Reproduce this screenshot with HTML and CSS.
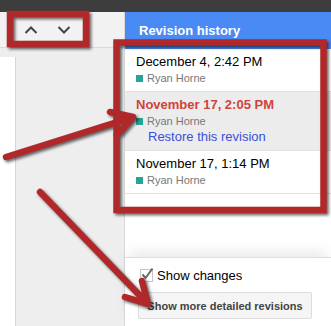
FILE: index.html
```html
<!DOCTYPE html>
<html lang="en">

<head>
    <meta charset="UTF-8">
    <meta name="viewport" content="width=device-width, initial-scale=1.0">
    <title>Revision history</title>
    <link rel="stylesheet" href="styles.css">
</head>

<body>
    <div class="topbar"></div>
    <div class="app">
        <div class="main">
            <div class="toolbar">
                <svg class="nav-icon" width="14" height="8" viewBox="0 0 14 8">
                    <path d="M1.5 7 L7 1.5 L12.5 7" />
                </svg>
                <svg class="nav-icon" width="14" height="8" viewBox="0 0 14 8">
                    <path d="M1.5 1 L7 6.5 L12.5 1" />
                </svg>
            </div>
            <div class="canvas">
                <div class="page"></div>
            </div>
        </div>

        <div class="panel">
            <div class="panel-title">Revision history</div>
            <ul class="revisions">
                <li class="rev">
                    <div class="rev-date">December 4, 2:42 PM</div>
                    <div class="rev-author"><span class="swatch"></span>Ryan Horne</div>
                </li>
                <li class="rev selected">
                    <div class="rev-date">November 17, 2:05 PM</div>
                    <div class="rev-author"><span class="swatch"></span>Ryan Horne</div>
                    <a class="restore" href="#">Restore this revision</a>
                </li>
                <li class="rev">
                    <div class="rev-date">November 17, 1:14 PM</div>
                    <div class="rev-author"><span class="swatch"></span>Ryan Horne</div>
                </li>
            </ul>
            <div class="panel-footer">
                <label class="show-changes">
                    <span class="checkbox">
                        <svg width="15" height="15" viewBox="0 0 15 15">
                            <path d="M2.5 7.5 L5.5 11 L12.5 1.5" />
                        </svg>
                    </span>
                    Show changes
                </label>
                <button class="detail-btn">Show more detailed revisions</button>
            </div>
        </div>
    </div>

    <!-- screenshot annotations drawn on top -->
    <svg class="annotations" width="331" height="326" viewBox="0 0 331 326">
        <rect x="10" y="14" width="76" height="30" />
        <rect x="116.5" y="42.5" width="207" height="167.5" />
        <path d="M6 157 L133 117 M110 112 L133 117 L117 135" />
        <path d="M40 192 L148 304 M125 297 L148 304 L142 281" />
    </svg>
</body>

</html>
```

FILE: styles.css
```css
body {
    margin: 0;
    font-family: "Liberation Sans", Arial, sans-serif;
    width: 331px;
    height: 326px;
    overflow: hidden;
    position: relative;
}

.topbar {
    height: 12px;
    background-color: #3d3d3d;
}

.app {
    display: flex;
    height: 314px;
}

.main {
    width: 124px;
    display: flex;
    flex-direction: column;
    background-color: #eeeeee;
}

.toolbar {
    height: 35px;
    display: flex;
    align-items: center;
    gap: 19px;
    padding-left: 24px;
    background-color: #f2f2f2;
    border-bottom: 1px solid #dadada;
}

.nav-icon path {
    fill: none;
    stroke: #444;
    stroke-width: 2;
}

.canvas {
    flex: 1;
    padding-top: 9px;
}

.page {
    width: 15px;
    height: 100%;
    background-color: #fff;
    border-right: 1px solid #d6d6d6;
}

.panel {
    flex: 1;
    display: flex;
    flex-direction: column;
    background-color: #fff;
    border-left: 1px solid #d9d9d9;
}

.panel-title {
    height: 37px;
    line-height: 37px;
    padding-left: 14px;
    background-color: #4a8af4;
    color: #fff;
    font-size: 13px;
    font-weight: bold;
}

.revisions {
    flex: 1;
    list-style: none;
    margin: 0;
    padding: 0;
}

.rev {
    padding: 5px 12px 5px 11px;
    border-bottom: 1px solid #e3e3e3;
}

.rev.selected {
    background-color: #ececec;
}

.rev-date {
    font-size: 13px;
    line-height: 16px;
    color: #000;
}

.selected .rev-date {
    color: #d0433a;
    font-weight: bold;
}

.rev-author {
    font-size: 11px;
    line-height: 16px;
    color: #777;
}

.swatch {
    display: inline-block;
    width: 7px;
    height: 7px;
    margin-right: 4px;
    background-color: #26a495;
}

.restore {
    display: block;
    margin-left: 12px;
    font-size: 13px;
    line-height: 16px;
    color: #3b4fd9;
    text-decoration: none;
}

.panel-footer {
    height: 58px;
    padding: 10px 0 0 13px;
    border-top: 1px solid #dedede;
    box-shadow: 0 -8px 14px -4px rgba(0, 0, 0, 0.1);
    position: relative;
}

.show-changes {
    display: flex;
    align-items: center;
    gap: 4px;
    height: 15px;
    font-size: 13px;
    color: #000;
}

.checkbox {
    width: 11px;
    height: 11px;
    margin-left: 2px;
    border: 1px solid #c6c6c6;
    background-color: #fff;
    position: relative;
}

.checkbox svg {
    position: absolute;
    left: -1px;
    top: -3px;
}

.checkbox path {
    fill: none;
    stroke: #666;
    stroke-width: 2;
}

.detail-btn {
    margin-top: 9px;
    width: 174px;
    height: 27px;
    padding: 0;
    border: 1px solid #dcdcdc;
    border-radius: 2px;
    background-color: #f5f5f5;
    color: #444;
    font-family: "Liberation Sans", Arial, sans-serif;
    font-size: 11px;
    font-weight: bold;
}

.annotations {
    position: absolute;
    left: 0;
    top: 0;
    filter: drop-shadow(2px 2px 1.5px rgba(0, 0, 0, 0.6));
}

.annotations rect,
.annotations path {
    fill: none;
    stroke: #b0282a;
    stroke-width: 6.5;
    stroke-linecap: round;
    stroke-linejoin: round;
}

.annotations rect {
    stroke-linecap: butt;
    stroke-linejoin: miter;
}
```
